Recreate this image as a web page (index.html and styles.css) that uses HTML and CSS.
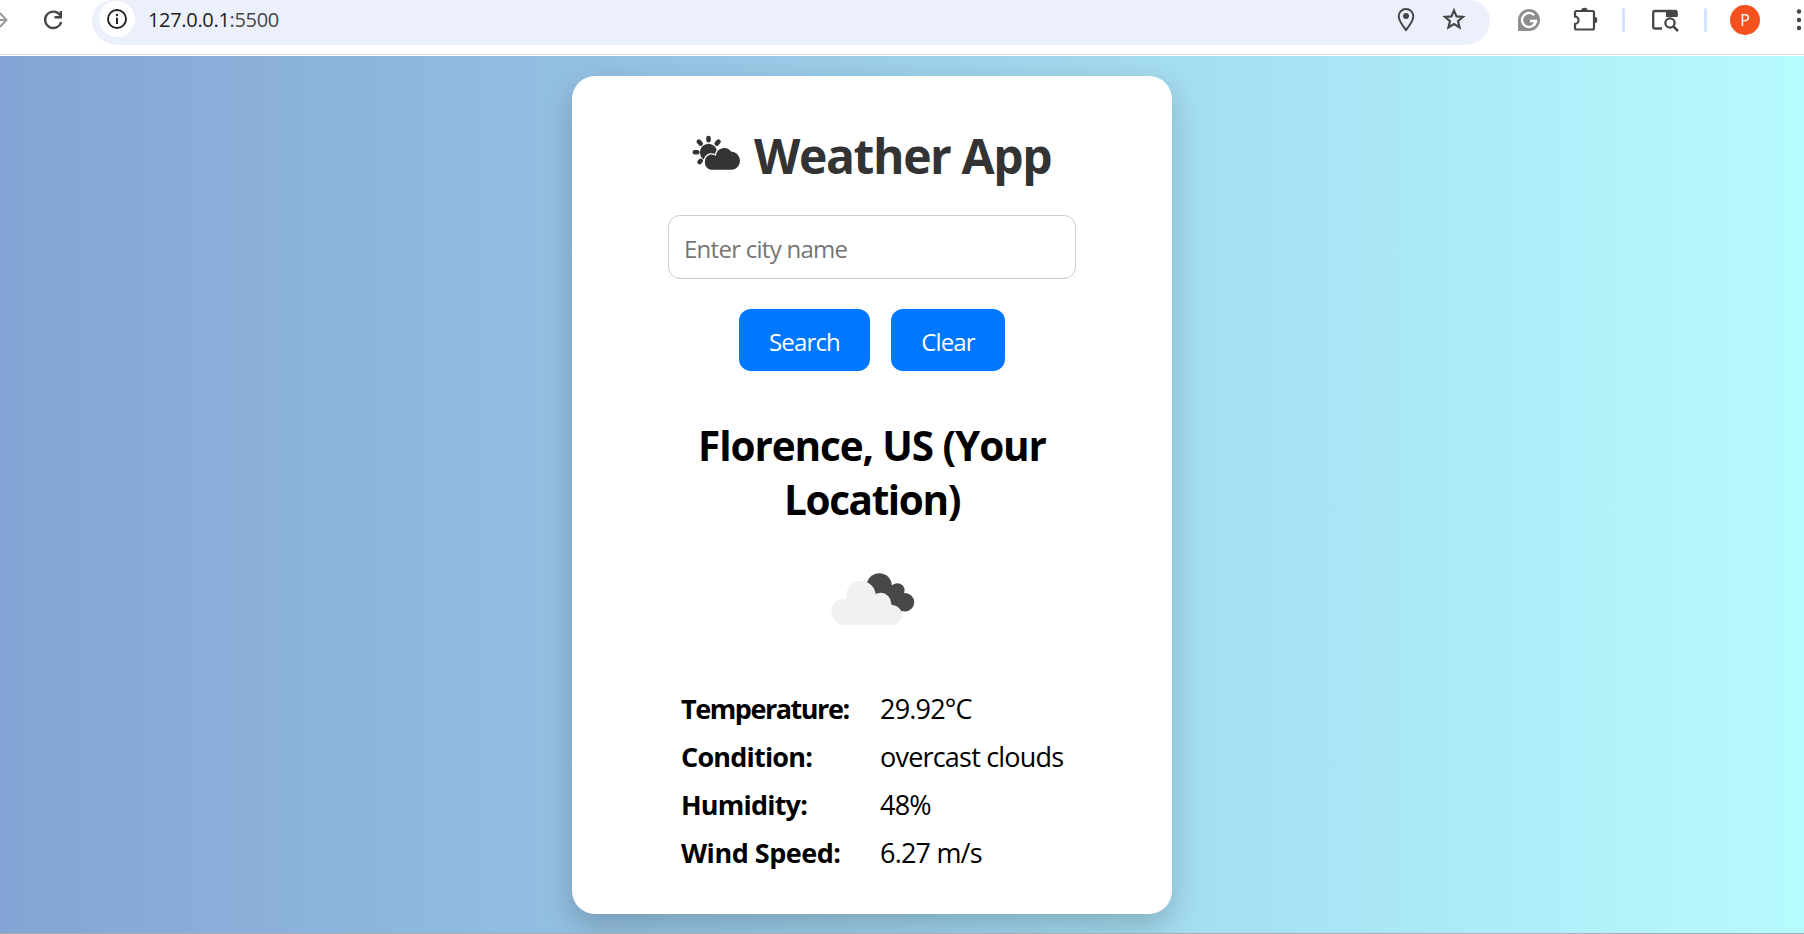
FILE: index.html
```html
<!DOCTYPE html>
<html lang="en">
<head>
<meta charset="utf-8">
<title>Weather App</title>
<link rel="stylesheet" href="styles.css">
</head>
<body>
<header class="toolbar">
  <svg class="forward" width="9" height="24" viewBox="0 0 9 24"><path d="M0 12H6M0 5.2L6.5 12L0 18.800" fill="none" stroke="#999" stroke-width="2"/></svg>
  <svg class="reload" width="24" height="24" viewBox="0 0 24 24"><path d="M19.300 7.500A8.200 8.200 0 1 0 20.200 14" fill="none" stroke="#444746" stroke-width="2.300"/><path d="M21 3V10.400H13.500V8.100H18.700V3Z" fill="#444746"/></svg>
  <div class="address">
    <span class="info"><svg width="22" height="22" viewBox="0 0 22 22"><circle cx="11" cy="11" r="9" fill="none" stroke="#202124" stroke-width="1.900"/><path d="M11 9.700V16" stroke="#202124" stroke-width="2"/><circle cx="11" cy="7" r="1.200" fill="#202124"/></svg></span>
    <span class="url">127.0.0.1<span class="port">:5500</span></span>
    <svg class="pin" width="20" height="26" viewBox="0 0 20 26"><path d="M10 23C5.500 17.500 2.700 13.800 2.700 9.300A7.300 7.300 0 0 1 17.300 9.300C17.300 13.800 14.500 17.500 10 23Z" fill="none" stroke="#444746" stroke-width="2"/><circle cx="10" cy="9" r="3" fill="#444746"/></svg>
    <svg class="star" width="24" height="24" viewBox="0 0 24 24"><path d="M12 3.300L14.500 9.400L21 9.900L16 14.100L17.600 20.500L12 17L6.400 20.500L8 14.100L3 9.900L9.500 9.400Z" fill="none" stroke="#444746" stroke-width="2.100"/></svg>
  </div>
  <svg class="grammarly" width="24" height="24" viewBox="0 0 24 24"><path d="M12 1A11 11 0 1 1 12 23H1V12A11 11 0 0 1 12 1Z" fill="#8e8e8e"/><path d="M17.200 7.200A7 7 0 1 0 19 13H13M19 13L16.500 17" fill="none" stroke="#fff" stroke-width="2.300"/></svg>
  <svg class="puzzle" width="28" height="28" viewBox="0 0 28 28"><path d="M3 7.500Q3 6 4.500 6H20.500Q22 6 22 7.500V23Q22 24.500 20.500 24.500H4.500Q3 24.500 3 23V18.900A3.600 3.600 0 0 0 3 11.700Z" fill="none" stroke="#444746" stroke-width="2.200" stroke-linejoin="round"/><path d="M9.200 6A3.300 3.300 0 0 1 15.800 6ZM22 11.800A3.300 3.300 0 0 1 22 18.400Z" fill="#444746"/></svg>
  <i class="divider first"></i>
  <svg class="tabsearch" width="28" height="24" viewBox="0 0 28 24"><path d="M11 20.500H4Q2.200 20.500 2.200 18.700V4.800Q2.200 3 4 3H24Q25.500 3 25.500 4.500V8" fill="none" stroke="#444746" stroke-width="2.300"/><path d="M15 2H24.500Q26.500 2 26.500 4V9H15Z" fill="#444746"/><circle cx="19" cy="15" r="4.600" fill="#fff" stroke="#444746" stroke-width="2.300"/><path d="M22.300 18.300L27 23" stroke="#444746" stroke-width="2.500"/></svg>
  <i class="divider second"></i>
  <span class="avatar">P</span>
  <svg class="more" width="6" height="24" viewBox="0 0 6 24"><g fill="#444746"><circle cx="3" cy="3.500" r="2.200"/><circle cx="3" cy="12" r="2.200"/><circle cx="3" cy="20" r="2.200"/></g></svg>
</header>
<main class="page">
  <section class="card">
    <h1 class="title">
      <svg class="title-icon" width="50" height="36" viewBox="0 0 50 36">
        <g stroke="#333" stroke-width="4.600" stroke-linecap="round"><path d="M16.500 3V5.300M6.800 6.700L8.700 8.600M26.500 6.700L24.700 8.600M2.800 17.300H5.300M7.600 27L8.700 25.900"/></g>
        <circle cx="16.500" cy="17.300" r="8.600" fill="#333"/>
        <path d="M18.500 35.500A8.700 8.700 0 0 1 18 18.900Q21 18.600 23.400 19.800A8.900 8.900 0 0 1 39.200 15.800A9.900 9.900 0 0 1 40 35.500Z" fill="#333" stroke="#fff" stroke-width="1.300"/>
      </svg>
      <span class="title-text">Weather App</span>
    </h1>
    <input class="city" type="text" placeholder="Enter city name">
    <div class="actions">
      <button class="btn search"><span>Search</span></button>
      <button class="btn clear"><span>Clear</span></button>
    </div>
    <h2 class="place">Florence, US (Your<br><span class="place-end">Location)</span></h2>
    <svg class="cloud" width="86" height="54" viewBox="0 0 86 54">
      <g fill="#48484a"><circle cx="50.300" cy="13.700" r="12.500"/><circle cx="68.300" cy="18.500" r="7.300"/><circle cx="76" cy="30.300" r="9.200"/><path d="M42 20L60 10L76 28V39H72L50 24Z"/></g>
      <g fill="#f1f1ef"><circle cx="15.700" cy="39.700" r="13.300"/><circle cx="32" cy="23.700" r="14.700"/><circle cx="51.700" cy="31.300" r="10.500"/><circle cx="63" cy="43" r="10"/><path d="M15.700 30L32 24H51L60 36L63 53H15.700Z"/></g>
    </svg>
    <dl class="facts">
      <dt class="temperature">Temperature:</dt><dd>29.92°C</dd>
      <dt>Condition:</dt><dd>overcast clouds</dd>
      <dt>Humidity:</dt><dd>48%</dd>
      <dt class="wind">Wind Speed:</dt><dd>6.27 m/s</dd>
    </dl>
  </section>
</main>
</body>
</html>
```
FILE: styles.css
```css
* { box-sizing: border-box; }
body { margin: 0; height: 934px; overflow: hidden; font-family: "Open Sans", "Noto Sans", sans-serif; color: #000; background: #fff; }
svg { display: block; flex: none; }
.toolbar { height: 55px; border-bottom: 1px solid #dcdfdc; display: flex; align-items: flex-start; background: #fff; }
.forward { margin-top: 8px; }
.reload { margin: 8px 0 0 32px; }
.address { flex: none; width: 1398px; height: 45px; margin-left: 27px; background: #ecf0fa; border-radius: 20px 20px 25px 25px; display: flex; align-items: flex-start; }
.info { width: 36px; height: 36px; margin: 1px 0 0 7px; border-radius: 50%; background: #fff; display: flex; align-items: center; justify-content: center; }
.url { width: 150px; margin: 6px 0 0 13px; font-size: 20px; line-height: 28px; letter-spacing: -.32px; color: #202124; white-space: nowrap; }
.port { color: #474747; }
.pin { margin: 7px 0 0 1098px; }
.star { margin: 7px 0 0 26px; }
.grammarly { margin: 8px 0 0 27px; }
.puzzle { margin: 5px 0 0 31px; }
.divider { flex: none; width: 3px; height: 24px; margin-top: 8px; border-radius: 2px; background: #d3e3fd; }
.first { margin-left: 22px; }
.tabsearch { margin: 8px 0 0 26px; }
.second { margin-left: 25px; }
.avatar { flex: none; width: 30px; height: 30px; margin: 5px 0 0 23px; border-radius: 50%; background: #f4511e; color: #fff; font-size: 16px; line-height: 30px; text-align: center; }
.more { margin: 8px 0 0 36px; }
.page { height: 878px; margin-top: 1px; padding-top: 20px; border-bottom: 1px solid #a9aeb2; background: linear-gradient(to right, #83a4d4, #b6fbff); overflow: hidden; }
.card { width: 600px; height: 838px; margin-left: 572px; padding-top: 48px; border-radius: 23px; background: #fff; box-shadow: 0 12px 30px rgba(0, 0, 0, .2); display: flex; flex-direction: column; align-items: center; }
.title { width: 360px; height: 64px; margin: 0; display: flex; gap: 12px; color: #333; font-size: 48px; line-height: 64px; white-space: nowrap; }
.title-icon { margin-top: 11px; }
.title-text { letter-spacing: -1.4px; }
.city { width: 408px; height: 64px; margin: 27px 0 0; padding: 2px 15px 0; border: 1px solid #ccc; border-radius: 12px; font: 24px "Open Sans", "Noto Sans", sans-serif; letter-spacing: -.73px; outline: 0; }
.city::placeholder { color: #757575; }
.actions { display: flex; gap: 21px; margin-top: 30px; }
.btn { height: 62px; padding: 3px 0 0; border: 0; border-radius: 12px; background: #0077ff; color: #fff; font: 24px "Open Sans", "Noto Sans", sans-serif; letter-spacing: -.85px; }
.search { width: 131px; }
.clear { width: 114px; }
.place { margin: 48px 0 0; font-size: 40.5px; line-height: 54px; text-align: center; letter-spacing: -1.12px; white-space: nowrap; }
.place-end { letter-spacing: -1.4px; }
.cloud { margin-top: 45px; }
.facts { width: 382px; margin: 65px 0 0 109px; display: grid; grid-template-columns: 199px 1fr; row-gap: 12px; font-size: 27px; line-height: 36px; align-self: flex-start; white-space: nowrap; letter-spacing: -.8px; }
.facts dt { font-weight: 700; }
.facts dd { margin: 0; }
.facts .temperature { letter-spacing: -1.45px; }
.facts .wind { letter-spacing: -.48px; }
```
